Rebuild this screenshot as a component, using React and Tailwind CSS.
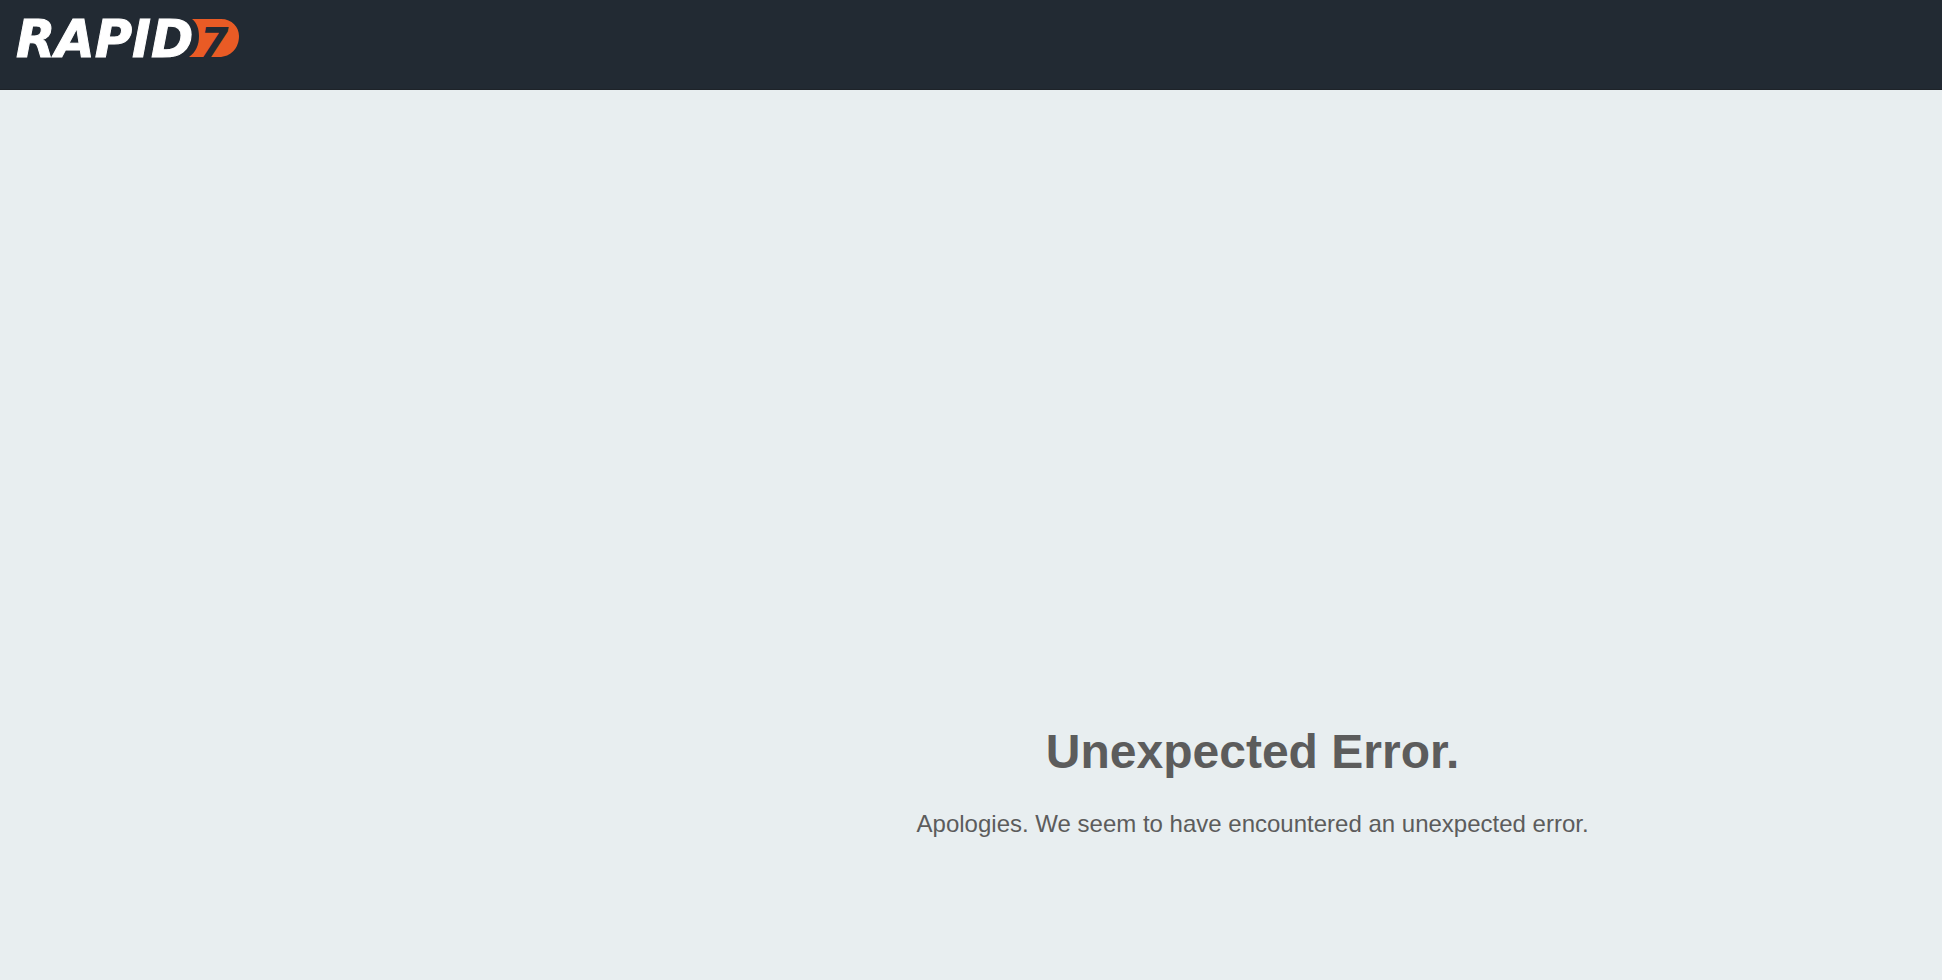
import React from 'react';

function Logo() {
    return (
        <svg
            width="232"
            height="64"
            viewBox="0 0 232 64"
            role="img"
            aria-label="Rapid7"
            className="block"
        >
            <text
                x="4"
                y="49"
                fill="#ffffff"
                stroke="#ffffff"
                strokeWidth="1"
                className="font-['DejaVu_Sans',sans-serif] text-[51px] font-bold italic"
            >
                RAPID
            </text>

            {/* Orange badge, curved in on the left to follow the D */}
            <path
                d="M180 11H209C220 11 227 19 227 28C227 40 219 49 207 49H177C184 44 187 37 187 28C187 21 185 15 180 11Z"
                fill="#e95b25"
            />
            <text x="188" y="49" fill="#222a33" className="font-['DejaVu_Sans',sans-serif] text-[41px] font-bold italic">
                7
            </text>
        </svg>
    );
}

export default function App() {
    return (
        <div className="min-h-screen bg-[#e8eef0] font-['Liberation_Sans',Arial,sans-serif] text-[#5c5c5c]">
            <header className="h-[90px] bg-[#222a33] px-3 pt-2 border-b border-[#1e2329]">
                <a href="/" className="inline-block">
                    <Logo />
                </a>
            </header>

            <main className="pl-[29%] pt-[638px] text-center">
                <h1 className="text-5xl font-bold">Unexpected Error.</h1>
                <p className="mt-8 text-2xl">
                    Apologies. We seem to have encountered an unexpected error.
                </p>
            </main>
        </div>
    );
}
